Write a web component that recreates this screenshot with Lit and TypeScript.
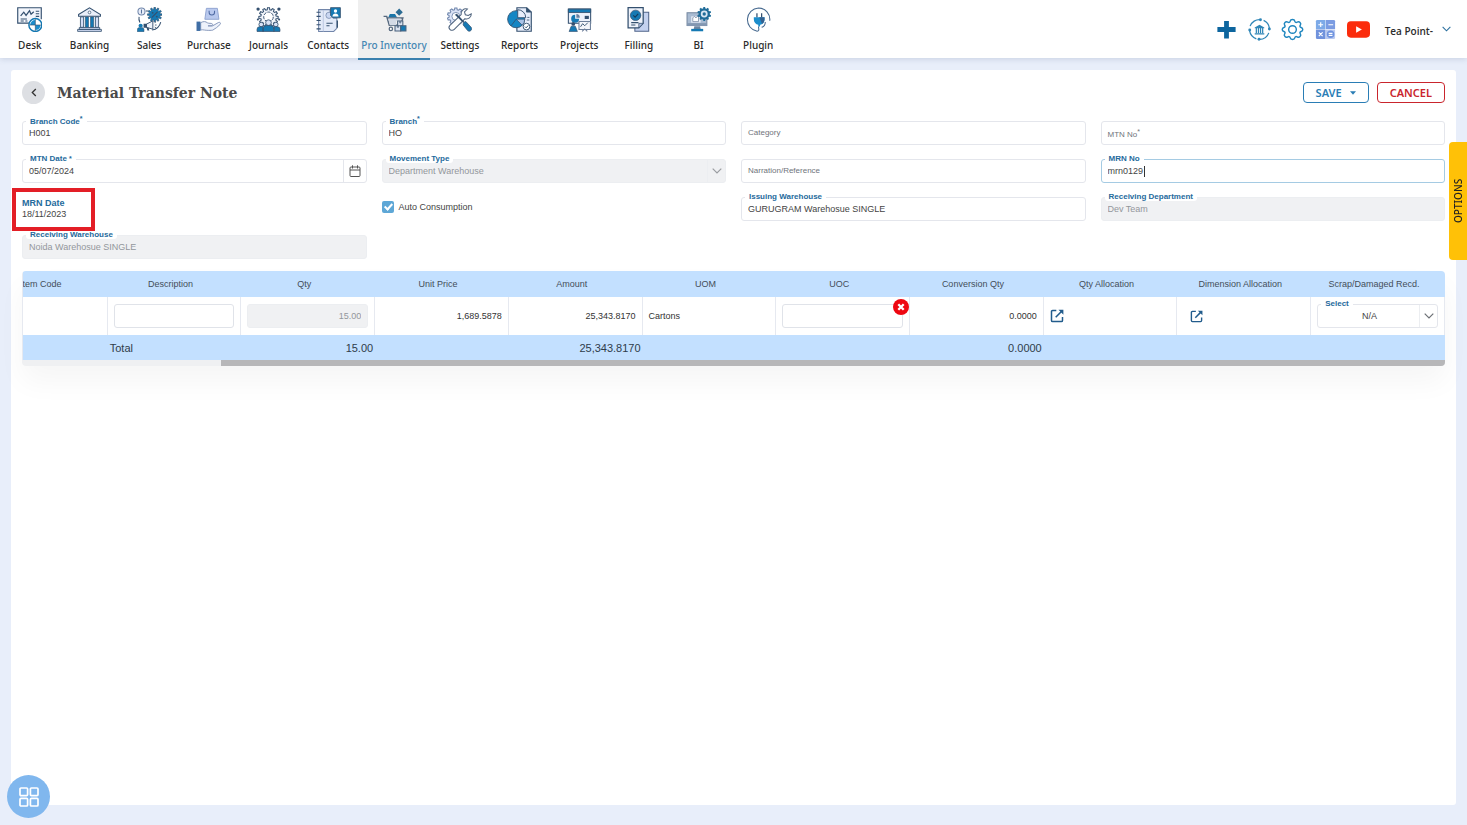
import { LitElement, html, svg, css, nothing, TemplateResult, SVGTemplateResult } from "lit";
import { customElement, property } from "lit/decorators.js";
import { classMap } from "lit/directives/class-map.js";

/** Outline of a toothed wheel centred on (cx, cy). */
function gear(cx: number, cy: number, outer: number, inner: number, teeth: number): string {
  const step = (Math.PI * 2) / teeth;
  const at = (r: number, a: number) =>
    `${(cx + r * Math.cos(a)).toFixed(2)} ${(cy + r * Math.sin(a)).toFixed(2)}`;
  let d = "";
  for (let i = 0; i < teeth; i++) {
    const a = i * step - Math.PI / 2;
    d += `${i ? "L" : "M"}${at(inner, a - step * 0.32)}L${at(outer, a - step * 0.2)}L${at(outer, a + step * 0.2)}L${at(inner, a + step * 0.32)}`;
  }
  return d + "Z";
}

const NAVY = "#34506f";
const BLUE = "#1579b3";
const PALE = "#d3def6";

const navIcons: Record<string, SVGTemplateResult> = {
  desk: svg`
    <path d="M12 15.5H.7V.7h22.6v11" fill="#f3f6fc" stroke=${NAVY} stroke-width="1.1"/>
    <path d="M3.500 8.500 6.500 5l2.200 3L12 3.500l1.500 3.500 2.600-2.500" fill="none" stroke=${NAVY} stroke-width="1.200"/>
    <path d="M18 4h3.300M18 6.500h3.300M18 9h3.300M3.500 11.500h6M3.500 13.500h3M8 13.500h2" stroke=${NAVY} stroke-width="1"/>
    <circle cx="17.600" cy="17.300" r="6.200" fill="#fff" stroke=${BLUE} stroke-width="1.400"/>
    <path d="M17.600 17.300V12.400a5 5 0 0 0-5 4.900zM17.600 17.300v4.900a5 5 0 0 0 5-4.900z" fill="#1b8dcc"/>
    <path d="M17.600 11.500v11.600M11.800 17.300h11.600" stroke=${NAVY} stroke-width=".6"/>`,
  banking: svg`
    <path d="M1.500 7.200 12 .8l10.500 6.400v1.600h-21z" fill="#e9eef9" stroke=${NAVY} stroke-width="1"/>
    <circle cx="12" cy="5.200" r="1.300" fill="#fff" stroke=${NAVY} stroke-width=".7"/>
    <g fill=${PALE} stroke=${NAVY} stroke-width=".8"><path d="M3.300 9.500h3v10h-3zM17.700 9.500h3v10h-3z"/></g>
    <path d="M8 9.500h3v10H8zM13 9.500h3v10h-3z" fill=${BLUE} stroke=${NAVY} stroke-width=".6"/>
    <path d="M2.200 19.700h19.600v1.800H2.200zM.6 21.500h22.800v1.900H.6z" fill=${PALE} stroke=${NAVY} stroke-width=".8"/>`,
  sales: svg`
    <circle cx="4.300" cy="4.300" r="3.400" fill="#e9eef9" stroke="#7187ab" stroke-width="1"/>
    <path d="M4.300 2.400v3.800" stroke="#56729c" stroke-width="1"/>
    <path d=${gear(17, 7.3, 7, 5.2, 12)} fill=${BLUE} stroke=${NAVY} stroke-width=".6"/>
    <path d="m14.600 9.700 4.800-4.800" stroke=${NAVY} stroke-width="1.200" stroke-linecap="round"/>
    <circle cx="15" cy="5.600" r=".9" fill=${NAVY}/><circle cx="19" cy="9.200" r=".9" fill=${NAVY}/>
    <path d="M8.500 3.800h2M2 9.500c-.5 2 0 3.700.8 5.300M22.800 14.500c-1 4-4.300 7-8.300 7.600" fill="none" stroke=${NAVY} stroke-width="1"/>
    <path d="m9 16.500 6.200-3.200v8L9 19.500z" fill="#eef2fa" stroke=${NAVY} stroke-width=".9"/>
    <path d="M6.300 16h3.200v4H6.300zM9.200 20h2l.6 2.600H10z" fill=${NAVY}/>
    <path d="m17 15 1.300-.8M17.200 17.300h1.600M17 19.300l1.300.8" stroke=${NAVY} stroke-width=".8"/>
    <circle cx="3.500" cy="18" r="2" fill=${BLUE}/><path d="M.3 23.700v-2a2 2 0 0 1 2-1.900h2.400a2 2 0 0 1 2 1.900v2z" fill=${BLUE} stroke=${NAVY} stroke-width=".5"/>`,
  purchase: svg`
    <path d="M10 1.300h10.500l1.500 10.500H8.500z" fill="#b9c9ee" stroke="#8ea3d0" stroke-width=".9"/>
    <path d="M12.600 3.500v1.600a2.600 2.600 0 0 0 5.200 0V3.500" fill="none" stroke="#4e6aa3" stroke-width="1"/>
    <path d="M4.500 15c3-1.500 4.700-1.200 6.500.2 1.500.9 3.500 0 4.700 1 .7.800.1 1.900-1 1.900h-3.200 4.500l5.500-3.200c1.500-.7 2.700.7 1.600 1.900-2 2.100-4.500 4-7 5.400-1 .4-6.500.3-8.100-.1-1.300-.3-2.500-.3-3.500 0z" fill="#eef2fb" stroke="#8294b8" stroke-width=".9"/>
    <path d="M.5 14h3.800v9H.5z" fill="#3f6ea5"/>`,
  journals: svg`
    <path d=${gear(12, 10, 9.3, 7.4, 12)} fill="#f1f4fa" stroke=${NAVY} stroke-width="1"/>
    <circle cx="12" cy="9.500" r="4.600" fill="#fff" stroke=${NAVY} stroke-width=".9" stroke-dasharray="3 1"/>
    <g fill=${NAVY}><circle cx="2" cy="2" r="1.600"/><circle cx="22" cy="2" r="1.600"/><circle cx="1.800" cy="12" r="1"/><circle cx="22.200" cy="12" r="1"/></g>
    <g fill="#d9e2f5" stroke=${NAVY} stroke-width=".8"><circle cx="5" cy="16.800" r="2.200"/><circle cx="19" cy="16.800" r="2.200"/><circle cx="12" cy="15" r="2.700"/></g>
    <path d="M1 23.500v-2a2.600 2.600 0 0 1 2.600-2.600h3L7 23.500zM23 23.500v-2a2.600 2.600 0 0 0-2.600-2.600h-3l-.4 4.600zM6.600 23.500v-2.300a3.400 3.400 0 0 1 3.400-3.400h4a3.400 3.400 0 0 1 3.400 3.400v2.300z" fill=${BLUE} stroke=${NAVY} stroke-width=".7"/>`,
  contacts: svg`
    <path d="M2.500 2.500h11v3.500l3 4.500h3.500V20.500l-3 3H2.500z" fill="#e3eaf8" stroke="#7286aa" stroke-width="1"/>
    <path d="M7 3v20.500" stroke="#b4c1dc" stroke-width=".8"/>
    <g fill="none" stroke=${NAVY} stroke-width="1"><path d="M.5 5h4M.5 9h4M.5 13h4M.5 17h4M.5 21h4"/><path d="M10 15.500h6M10 18h3"/></g>
    <circle cx="12.500" cy="8" r="3" fill="#cad7f2" stroke="#7286aa" stroke-width=".7"/>
    <path d="M14 .6h9.400v9.800h-7L14 8z" fill=${BLUE} stroke=${NAVY} stroke-width=".8"/>
    <circle cx="18.700" cy="3.800" r="1.600" fill="#fff"/><path d="M15.800 9c0-3.800 5.800-3.800 5.800 0z" fill="#fff"/>
    <path d="M20.500 13v7" stroke=${NAVY} stroke-width="1.200"/>`,
  inventory: svg`
    <path d="m16.500 1.500 3.500 3.500-3.500 3.500L13 5z" fill="#2c6c94"/>
    <path d="M6 10 7.500 6.800h5L14.500 10z" fill="#1b75a8"/>
    <path d="M1.500 9h3L7 17.500h8.500M5 10.500h15l-1 3.500" fill="none" stroke="#56687e" stroke-width="1.400"/>
    <path d="M6 11h12v2.500h-4.500v4H7.500z" fill="#d3dae6"/>
    <circle cx="8.500" cy="21" r="1.600" fill="#fff" stroke="#56687e" stroke-width="1.200"/>
    <path d="M15 13.500h5v4.500h-5zM12.500 18h5.500v5h-5.500z" fill="#d9e1ef" stroke="#49617c" stroke-width="1"/>
    <path d="M18 18h5v5h-5z" fill=${BLUE} stroke="#49617c" stroke-width="1"/>
    <path d="M17 13.500v1.800h1v-1.800M14.800 18v1.600h1V18" fill="none" stroke="#49617c" stroke-width=".7"/>`,
  settings: svg`
    <path d=${gear(8.5, 9, 8.2, 6.5, 10)} fill="#dce4f7" stroke="#6d84ab" stroke-width="1"/>
    <circle cx="8.500" cy="9" r="3.800" fill="#fff" stroke="#6d84ab" stroke-width=".8"/>
    <path d="M23.300 6.500a4.600 4.600 0 0 1-6 4.700L7 21.500a2.800 2.800 0 0 1-4.200-3.900L13.600 7.300a4.600 4.600 0 0 1 6-5.300l-2.800 2.700.8 2.700 2.800.7z" fill="#fff" stroke="#51657f" stroke-width="1"/>
    <path d="m7.500 7.500 2-1 7 7.500-1 1z" fill=${NAVY}/>
    <path d="m15.800 14.800 2.200-.9 5.300 5.700c1.300 2.400-1.300 4.600-3.300 3.200l-4.500-5.600z" fill=${BLUE} stroke=${NAVY} stroke-width=".7"/>`,
  reports: svg`
    <path d="M9.500.7h9.500l4.300 4v18.600H9.500z" fill="#e6ecfa" stroke=${NAVY} stroke-width="1.100"/>
    <path d="M18.700.7v4.200h4.600" fill=${NAVY} stroke=${NAVY} stroke-width=".8"/>
    <circle cx="8.800" cy="11.700" r="8.200" fill="#1586c4" stroke=${NAVY} stroke-width=".8"/>
    <path d="M8.800 11.700H17a8.200 8.200 0 0 1-2.400 5.800z" fill="#a9c3e8" stroke=${NAVY} stroke-width=".7"/>
    <path d="m8.800 11.700-5 6.500" stroke=${NAVY} stroke-width=".8"/>
    <path d="M10.300 10.300V2.600a7.700 7.700 0 0 1 7.700 7.700z" fill="#e8edfa" stroke=${NAVY} stroke-width=".9"/>
    <path d="M19 12.500h2.500M19.500 10h2" stroke=${NAVY} stroke-width=".8"/>
    <circle cx="18.700" cy="18.800" r="3.200" fill="#fff" stroke=${NAVY} stroke-width=".9"/><path d="m17.200 18.800 1.200 1.200 2-2.300" fill="none" stroke=${NAVY} stroke-width=".9"/>`,
  projects: svg`
    <path d="M1.300 2h21.400v13.500H1.300z" fill="#edf2fb" stroke=${NAVY} stroke-width="1"/>
    <path d="M1.300 2h21.400v3.300H1.300z" fill=${BLUE} stroke=${NAVY} stroke-width=".8"/>
    <path d="M7.800 7.500a3.800 3.800 0 1 0 3.800 3.800H7.800z" fill=${BLUE}/><path d="M9 6.800v3.400h3.300A3.400 3.400 0 0 0 9 6.800z" fill="#69809f"/>
    <path d="M17 8.500h4v3h-4z" fill=${NAVY}/>
    <path d="M11.500 14h11v7.500h-11z" fill="#f4f6fb" stroke="#6d7f9a" stroke-width="1"/><path d="m13 19 2-3 2 2 3-3" fill="none" stroke=${NAVY} stroke-width=".9"/><path d="M14.500 23.500 17 21l2.500 2.500" fill="none" stroke="#6d7f9a"/>
    <circle cx="6" cy="16.300" r="1.800" fill=${NAVY}/><path d="m2 23.500 2-5h4l2 5z" fill=${BLUE} stroke=${NAVY} stroke-width=".6"/>`,
  filling: svg`
    <path d="M16 5h5.800v18.300H8.500V20" fill="#c3d1ef" stroke="#51658a" stroke-width="1"/>
    <path d="M2 .7h14.500v15L12.300 20H2z" fill="#eff3fb" stroke=${NAVY} stroke-width="1.200"/>
    <path d="M16.500 15.700h-4.200V20z" fill="#b3c3e6" stroke=${NAVY} stroke-width=".7"/>
    <circle cx="9.200" cy="8" r="5" fill=${BLUE} stroke=${NAVY} stroke-width=".7"/>
    <path d="m7 8 1.700 1.700 3-3.200" fill="none" stroke="#153a5b" stroke-width="1.100"/>
    <path d="M5 15h7M5 17.300h4" stroke=${NAVY} stroke-width="1"/>`,
  bi: svg`
    <path d="M1 5.500h19v12.300H1z" fill="#a9bbd2" stroke="#7487a0" stroke-width="1"/>
    <path d="M5 9h9v6H5z" fill="#e8eef7"/><path d="M6.500 10.500 8 9l1.500 1.500L12 8v6H6.500z" fill="#fff" stroke="#6f829c" stroke-width=".7"/>
    <path d="M1 15.500h19v2.800H1z" fill="#8397b1"/>
    <path d="M8 18.500h5.500l.6 2.500H7.400z" fill="#6e849f"/><path d="M5 21h11.500v2.300H5z" fill=${BLUE}/>
    <path d=${gear(17.5, 6.7, 6.7, 5.4, 10)} fill="#1f6c99"/>
    <circle cx="17.500" cy="6.700" r="3.300" fill="#d8e6f3"/><circle cx="17.500" cy="6.700" r="1.600" fill="#1f6c99"/>`,
  plugin: svg`
    <path d="M22.800 13.200A11 11 0 0 0 12 .9a11.300 11.300 0 0 0-1.300 22.400c2.500-.2 1.300-2.700 1.300-4.600" fill="none" stroke="#45688e" stroke-width="1"/>
    <path d="M18.500 14.500c0 3-1.200 4.500-3.500 5" fill="none" stroke="#45688e" stroke-width="1"/>
    <path d="M10.500 6v4M15 6v4" stroke=${NAVY} stroke-width="1.200"/>
    <path d="M7.500 9.800h10.300v2c0 3-2 5-4.300 5.300v1.500h-1.700v-1.500c-2.300-.3-4.300-2.300-4.300-5.300z" fill="#1b8dcc"/>
    <path d="M12.700 9.800h5.100v2c0 2-1 3.800-2.300 4.600z" fill="#35618f"/>`,
};

const chevron = html`<svg class="chevron" viewBox="0 0 10 6" aria-hidden="true"><path d="m.7.7 4.300 4.300L9.300.7" fill="none" stroke="currentColor" stroke-width="1.200"/></svg>`;

const launch = html`<svg viewBox="0 0 14 14" aria-hidden="true"><path d="M6.300 1.500H2.600a1.100 1.100 0 0 0-1.100 1.100v8.800a1.100 1.100 0 0 0 1.100 1.100h8.800a1.100 1.100 0 0 0 1.100-1.100V8" fill="none" stroke="#225c8c" stroke-width="1.500"/><path d="m5.700 8.300 6-6" stroke="#225c8c" stroke-width="1.600"/><path d="M8.500.8h4.900v4.900z" fill="#225c8c"/></svg>`;

@customElement("app-nav")
class AppNav extends LitElement {
  static styles = css`
    :host { display: block; position: relative; z-index: 1; }
    .bar { display: flex; justify-content: space-between; height: 58px; background: #fff; box-shadow: 0 1px 6px rgba(70, 90, 130, 0.2); font-family: "Noto Sans", sans-serif; }
    .menu { display: flex; flex: 0 1 788px; }
    .item { flex: 1 1 0; box-sizing: border-box; height: 58px; padding-top: 7px; display: flex; flex-direction: column; align-items: center; gap: 6px; font-size: 10px; font-weight: 500; line-height: 14px; color: #2a2a2a; text-decoration: none; white-space: nowrap; }
    .item svg { width: 25px; height: 25px; flex: none; }
    .item.active { flex: 0 0 72px; height: 60px; background: #efefef; color: #4687b3; border-bottom: 2px solid #3a80ae; }
    .tools { display: flex; align-items: center; gap: 10px; padding-right: 16px; }
    .tool { display: flex; border: 0; padding: 0; background: none; }
    .tool svg { width: 23px; height: 23px; }
    .company { display: flex; align-items: center; gap: 9px; margin-left: 5px; padding: 0; border: 0; background: none; font: 600 10px/14px "Open Sans", sans-serif; color: #2c2c2c; white-space: nowrap; }
    .company-name { padding-top: 3px; }
    .chevron { width: 9px; height: 6px; color: #2a6f9e; }
  `;

  private items: [string, string][] = [
    ["desk", "Desk"], ["banking", "Banking"], ["sales", "Sales"], ["purchase", "Purchase"],
    ["journals", "Journals"], ["contacts", "Contacts"], ["inventory", "Pro Inventory"],
    ["settings", "Settings"], ["reports", "Reports"], ["projects", "Projects"],
    ["filling", "Filling"], ["bi", "BI"], ["plugin", "Plugin"],
  ];

  render() {
    return html`<header class="bar">
      <nav class="menu">
        ${this.items.map(([key, label]) => html`<a href="#${key}" class=${classMap({ item: true, active: key === "inventory" })}>
          <svg viewBox="0 0 24 24" aria-hidden="true">${navIcons[key]}</svg>${label}</a>`)}
      </nav>
      <div class="tools">
        <button class="tool" aria-label="Add"><svg viewBox="0 0 24 24"><path d="M9.500 3h5v6.500h7v5h-7v7h-5v-7h-7v-5h7z" fill="#0d659e"/></svg></button>
        <button class="tool" aria-label="Bank sync"><svg viewBox="0 0 24 24" fill="none" stroke="#2f86b7" stroke-width="1.300">
          <path d="M13 1.700A10.400 10.400 0 0 0 2.200 8.500M1.700 13.500a10.400 10.400 0 0 0 7 8.200M12 22.300a10.400 10.400 0 0 0 9.700-6.800M22.300 10.500a10.400 10.400 0 0 0-6-8"/>
          <g fill="#2f86b7" stroke="none"><circle cx="13" cy="1.800" r="1.500"/><circle cx="1.800" cy="12.500" r="1.500"/><circle cx="11.500" cy="22.200" r="1.500"/><circle cx="22.300" cy="11.500" r="1.500"/><path d="M7 9.800 12 7l5 2.800v.9H7zM7 16h10v1.300H7z"/></g>
          <path d="M8.700 10.500v5.500M10.900 10.500v5.500M13.100 10.500v5.500M15.300 10.500v5.500"/></svg></button>
        <button class="tool" aria-label="Preferences"><svg viewBox="0 0 24 24" fill="none" stroke="#2187bf" stroke-width="1.500" stroke-linejoin="round">
          <path d="M12 1.500c1.500 0 2.200.5 2.500 2 .3 1.200 1.300 1.500 2.300.9 1.400-.9 2.300-.6 3.100.2s1 1.800.2 3c-.7 1-.3 2 .9 2.300 1.300.3 1.700 1 1.700 2.100s-.4 1.800-1.700 2.100c-1.200.3-1.600 1.300-.9 2.300.8 1.200.6 2.200-.2 3s-1.700 1.100-3.100.2c-1-.6-2-.3-2.300.9-.3 1.500-1 2-2.500 2s-2.200-.5-2.500-2c-.3-1.200-1.300-1.500-2.300-.9-1.400.9-2.300.6-3.100-.2s-1-1.800-.2-3c.7-1 .3-2-.9-2.300-1.300-.3-1.700-1-1.700-2.100s.4-1.800 1.700-2.100c1.200-.3 1.600-1.300.9-2.300-.8-1.200-.6-2.200.2-3s1.700-1.100 3.100-.2c1 .6 2 .3 2.300-.9.300-1.500 1-2 2.500-2z"/><circle cx="12" cy="12" r="4"/></svg></button>
        <button class="tool" aria-label="Calculator"><svg viewBox="0 0 24 24">
          <path d="M3.500 2H12v9.500H2V3.500A1.500 1.500 0 0 1 3.500 2z" fill="#7daae8"/><path d="M12.500 2h8A1.500 1.500 0 0 1 22 3.500v8h-9.500z" fill="#7b9ce2"/>
          <path d="M2 12h10v10H3.500A1.500 1.500 0 0 1 2 20.500z" fill="#7092dc"/><path d="M12.500 12H22v8.500a1.500 1.500 0 0 1-1.500 1.500h-8z" fill="#b9c9f0"/>
          <circle cx="17.300" cy="17" r="3.900" fill="#6f93de"/>
          <path d="M7 4.500v5M4.500 7h5M15 7h5M5 15l4 4M9 15l-4 4M15.300 16h4M15.300 18.200h4" stroke="#fff" stroke-width="1.200"/></svg></button>
        <button class="tool" aria-label="Videos"><svg viewBox="0 0 24 24"><rect x="0" y="3.500" width="24" height="17" rx="4" fill="#fb2c0c"/><path d="M9.500 8.500v7l6-3.500z" fill="#fff"/></svg></button>
        <button class="company"><span class="company-name">Tea Point-</span>${chevron}</button>
      </div>
    </header>`;
  }
}

@customElement("form-field")
class FormField extends LitElement {
  @property() label = "";
  @property() value = "";
  @property() kind: "text" | "select" | "date" = "text";
  @property({ type: Boolean }) required = false;
  @property({ type: Boolean }) disabled = false;
  @property({ type: Boolean }) active = false;
  @property({ type: Boolean }) compact = false;

  static styles = css`
    :host { display: block; min-width: 0; font-family: "Liberation Sans", Arial, sans-serif; }
    .field { position: relative; display: flex; box-sizing: border-box; height: 24px; border: 1px solid #e4e6ec; border-radius: 3px; background: #fff; }
    .field.active { border-color: #a5cbe3; }
    .field.disabled { background: #f0f1f3; border-color: #eceef1; }
    .control { flex: 1; min-width: 0; box-sizing: border-box; margin: 0; border: 0; padding: 0 6px; background: none; appearance: none; outline: 0; font: 9px/20px "Liberation Sans", Arial, sans-serif; color: #444; opacity: 1; border-radius: 0; }
    .field.disabled .control { color: #93979c; }
    .compact .control { text-align-last: center; padding-right: 22px; }
    .label { position: absolute; left: 3px; top: -5px; padding: 0 4px; border-radius: 3px; background: #fff; font-size: 8px; font-weight: 700; line-height: 8px; color: #256a9c; white-space: nowrap; }
    .label.raised { top: -4px; }
    .label.empty { left: 2px; top: 7px; font-weight: 400; color: #6f747b; background: none; }
    .label.empty.raised { top: 9px; }
    .star { font-size: 7px; line-height: 0; vertical-align: 3px; }
    .date .star { vertical-align: 0; margin-left: 2px; }
    .arrow { position: absolute; right: 0; top: 0; bottom: 0; width: 17px; display: flex; align-items: center; justify-content: center; border-left: 1px solid #eceef1; color: #6c7075; pointer-events: none; }
    .disabled .arrow { color: #9a9da1; }
    .chevron { width: 10px; height: 6px; }
    .calendar { width: 23px; padding: 0; display: flex; align-items: center; justify-content: center; border: 0; border-left: 1px solid #e4e6ec; background: none; color: #555; }
    .calendar svg { width: 12px; height: 12px; }
    .caret { position: absolute; left: 42px; top: 6px; width: 1px; height: 11px; background: #333; }
  `;

  render() {
    const empty = this.value === "";
    const date = this.kind === "date";
    return html`<div class=${classMap({ field: true, active: this.active, disabled: this.disabled, compact: this.compact, date })}>
      ${this.kind === "select"
        ? html`<select class="control" id="control" ?disabled=${this.disabled}><option>${this.value}</option></select><span class="arrow">${chevron}</span>`
        : html`<input class="control" id="control" type="text" .value=${this.value} ?disabled=${this.disabled} />`}
      ${date
        ? html`<button class="calendar" aria-label="Open calendar"><svg viewBox="0 0 12 12" fill="none" stroke="currentColor"><rect x="1" y="2" width="10" height="9.500" rx="1"/><path d="M1 5h10M3.500.3v3.200M8.500.3v3.200"/></svg></button>`
        : nothing}
      <label for="control" class=${classMap({ label: true, empty, raised: this.required && !date })}>${this.label}${this.required ? html`<span class="star">*</span>` : nothing}</label>
      ${this.active ? html`<span class="caret"></span>` : nothing}
    </div>`;
  }
}

@customElement("items-table")
class ItemsTable extends LitElement {
  static styles = css`
    :host { display: block; font-family: "Liberation Sans", Arial, sans-serif; font-size: 9px; color: #333; }
    .frame { overflow: hidden; border-radius: 4px; box-shadow: 0 16px 28px rgba(0, 0, 0, 0.04); }
    .view { display: flex; justify-content: flex-end; overflow: hidden; background: #fff; border-left: 1px solid #e6e9f0; }
    .table { flex: none; width: calc(100% + 49px); table-layout: fixed; border-collapse: separate; border-spacing: 0; }
    .table th { height: 26px; padding: 0; background: #c3e0ff; font-weight: 400; text-align: center; color: #444e59; }
    .table th + th { padding-right: 8px; }
    .table td { box-sizing: border-box; height: 38px; padding: 0 6px; border-right: 1px solid #e6e9f0; }
    .table tfoot td { height: 25px; padding: 0 2px; border: 0; background: #c3e0ff; font-size: 11px; color: #2f3c4a; }
    .table .num { text-align: right; }
    .box { display: block; width: 100%; height: 24px; box-sizing: border-box; padding: 0 6px; border: 1px solid #e0e3e9; border-radius: 3px; background: #fff; font: 9px/20px "Liberation Sans", Arial, sans-serif; }
    .box:disabled { background: #f0f1f3; border-color: #eceef1; color: #93979c; text-align: right; }
    .holder { position: relative; }
    .clear { position: absolute; top: -5px; right: -6px; width: 16px; height: 16px; padding: 0; border: 0; border-radius: 50%; background: #ee0711; display: flex; align-items: center; justify-content: center; }
    .clear svg { width: 8px; height: 8px; }
    .open { display: flex; padding: 0; border: 0; background: none; }
    .open svg { width: 14px; height: 14px; }
    .table .inset { padding-left: 13px; }
    .inset .open svg { width: 13px; height: 13px; }
    .track { display: flex; justify-content: flex-end; height: 6px; background: #eff0f2; }
    .thumb { background: #b7b7b9; }
  `;

  private columns = ["Item Code", "Description", "Qty", "Unit Price", "Amount", "UOM", "UOC", "Conversion Qty", "Qty Allocation", "Dimension Allocation", "Scrap/Damaged Recd."];
  private visibleShare = 86;

  render() {
    return html`<div class="frame">
      <div class="view"><table class="table">
        <thead><tr>${this.columns.map((c) => html`<th scope="col">${c}</th>`)}</tr></thead>
        <tbody><tr>
          <td></td>
          <td><input class="box" type="text" aria-label="Description" /></td>
          <td><input class="box" type="text" aria-label="Qty" value="15.00" disabled /></td>
          <td class="num">1,689.5878</td>
          <td class="num">25,343.8170</td>
          <td>Cartons</td>
          <td><div class="holder"><input class="box" type="text" aria-label="UOC" /><button class="clear" aria-label="Clear UOC"><svg viewBox="0 0 8 8"><path d="m1.300 1.300 5.400 5.400M6.700 1.300 1.300 6.700" stroke="#fff" stroke-width="2.300"/></svg></button></div></td>
          <td class="num">0.0000</td>
          <td><button class="open" aria-label="Open quantity allocation">${launch}</button></td>
          <td class="inset"><button class="open" aria-label="Open dimension allocation">${launch}</button></td>
          <td><form-field kind="select" label="Select" value="N/A" compact></form-field></td>
        </tr></tbody>
        <tfoot><tr>
          <td></td><td>Total</td><td class="num">15.00</td><td></td><td class="num">25,343.8170</td><td></td><td></td><td class="num">0.0000</td><td></td><td></td><td></td>
        </tr></tfoot>
      </table></div>
      <div class="track"><div class="thumb" style="width:${this.visibleShare}%"></div></div>
    </div>`;
  }
}

@customElement("app-root")
class AppRoot extends LitElement {
  static styles = css`
    :host { display: flex; flex-direction: column; min-height: 100vh; background: #e8eefa; font-family: "Liberation Sans", Arial, sans-serif; font-size: 9px; color: #444; }
    .page { flex: 1; display: flex; padding: 12px 11px 20px; }
    .card { flex: 1; min-width: 0; box-sizing: border-box; padding: 11px 11px 20px; background: #fff; border-radius: 3px; }
    .head { display: flex; align-items: center; gap: 12px; height: 23px; margin-bottom: 17px; }
    .back { width: 23px; height: 23px; padding: 0; border: 0; border-radius: 50%; background: #dddfe3; display: flex; align-items: center; justify-content: center; }
    .back svg { width: 6px; height: 9px; }
    .title { flex: 1; margin: 0; font: 700 14px/20px "DejaVu Serif", serif; color: #4a4a4a; }
    .actions { display: flex; gap: 8px; }
    .btn { display: flex; align-items: center; justify-content: center; gap: 8px; box-sizing: border-box; height: 21px; padding: 0 12px; border: 1px solid; border-radius: 4px; background: #fff; font: 600 11px/16px "Noto Sans", sans-serif; }
    .save { border-color: #2a7db5; color: #2a7db5; }
    .save svg { width: 6px; height: 4px; }
    .cancel { border-color: #c9252d; color: #c9252d; }
    .form { display: grid; grid-template-columns: repeat(4, minmax(0, 1fr)); gap: 14px 15px; margin-bottom: 12px; }
    .stamp { position: relative; height: 24px; box-sizing: border-box; padding-top: 1px; line-height: 11px; }
    .stamp-label { font-weight: 700; color: #256a9c; }
    .mark { position: absolute; left: -10px; top: -9px; width: 83px; height: 43px; box-sizing: border-box; border: 4px solid #e31e26; }
    .tick { display: flex; align-items: center; align-self: start; gap: 5px; height: 20px; }
    .tick input { position: relative; width: 12px; height: 12px; margin: 0; appearance: none; border-radius: 2px; background: #5ea7d6; }
    .tick input:checked::after { content: ""; position: absolute; left: 4px; top: 1px; width: 3px; height: 6px; box-sizing: content-box; border: solid #fff; border-width: 0 2px 2px 0; transform: rotate(42deg); }
    .wide { grid-column: 1; }
    .options { position: fixed; right: 0; top: 142px; width: 18px; height: 118px; padding: 0; border: 0; border-radius: 0 4px 4px 0; background: #ffc107; color: #222; font: 500 10px/18px "Noto Sans", sans-serif; writing-mode: vertical-rl; transform: rotate(180deg); text-align: center; }
    .apps { position: fixed; left: 7px; bottom: 7px; width: 43px; height: 43px; padding: 0; border: 0; border-radius: 50%; background: #80b7ee; display: flex; align-items: center; justify-content: center; }
    .apps svg { width: 20px; height: 20px; }
  `;

  render(): TemplateResult {
    return html`
      <app-nav></app-nav>
      <main class="page"><section class="card">
        <div class="head">
          <button class="back" aria-label="Back"><svg viewBox="0 0 6 9"><path d="M4.800 1 1.300 4.500l3.500 3.500" fill="none" stroke="#333" stroke-width="1.300"/></svg></button>
          <h1 class="title">Material Transfer Note</h1>
          <div class="actions">
            <button class="btn save">SAVE <svg viewBox="0 0 6 4"><path d="M0 .3h6L3 3.700z" fill="currentColor"/></svg></button>
            <button class="btn cancel">CANCEL</button>
          </div>
        </div>
        <div class="form">
          <form-field label="Branch Code" value="H001" required></form-field>
          <form-field label="Branch" value="HO" required></form-field>
          <form-field label="Category"></form-field>
          <form-field label="MTN No" required></form-field>
          <form-field label="MTN Date" value="05/07/2024" kind="date" required></form-field>
          <form-field label="Movement Type" value="Department Warehouse" kind="select" disabled></form-field>
          <form-field label="Narration/Reference"></form-field>
          <form-field label="MRN No" value="mrn0129" active></form-field>
          <div class="stamp"><div class="stamp-label">MRN Date</div><div>18/11/2023</div><div class="mark"></div></div>
          <label class="tick"><input type="checkbox" checked />Auto Consumption</label>
          <form-field label="Issuing Warehouse" value="GURUGRAM Warehosue SINGLE"></form-field>
          <form-field label="Receiving Department" value="Dev Team" disabled></form-field>
          <form-field class="wide" label="Receiving Warehouse" value="Noida Warehosue SINGLE" disabled></form-field>
        </div>
        <items-table></items-table>
      </section></main>
      <button class="options">OPTIONS</button>
      <button class="apps" aria-label="Applications"><svg viewBox="0 0 20 20" fill="none" stroke="#fff" stroke-width="1.700"><rect x="1" y="1" width="7.600" height="7.600" rx="1"/><rect x="11.400" y="1" width="7.600" height="7.600" rx="1"/><rect x="1" y="11.400" width="7.600" height="7.600" rx="1"/><rect x="11.400" y="11.400" width="7.600" height="7.600" rx="1"/></svg></button>
    `;
  }
}
